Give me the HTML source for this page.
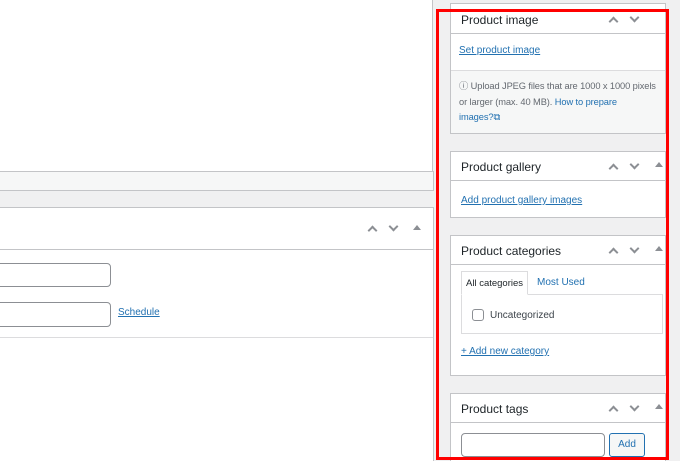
<!DOCTYPE html>
<html><head><style>
*{box-sizing:border-box;margin:0;padding:0}
html,body{width:680px;height:461px;overflow:hidden}
body{background:#f0f0f1;font-family:"Liberation Sans",sans-serif;font-size:13px;color:#1d2327;position:relative}
.abs{position:absolute}
.box{position:absolute;background:#fff;border:1px solid #c3c4c7}
.hd{position:absolute;left:0;right:0;top:0;border-bottom:1px solid #c3c4c7}
.ttl{position:absolute;left:10px;font-size:12px;color:#1d2327}
a{color:#2271b1;text-decoration:underline;font-size:10px}
.arr{position:absolute;width:7px;height:7px;border-left:2px solid #8c8f94;border-top:2px solid #8c8f94}
.up{transform:rotate(45deg)}
.dn{transform:rotate(225deg)}
.tri{position:absolute;width:0;height:0;border-left:4px solid transparent;border-right:4px solid transparent;border-bottom:5px solid #8c8f94}
.inp{position:absolute;border:1px solid #8c8f94;border-radius:4px;background:#fff}
</style></head><body>
<div class="abs" style="left:0;top:0;width:433px;height:172px;background:#fff;border-right:1px solid #c3c4c7"></div>
<div class="abs" style="left:0;top:171px;width:434px;height:20px;background:#f6f7f7;border-top:1px solid #c3c4c7;border-bottom:1px solid #c3c4c7;border-right:1px solid #c3c4c7"></div>
<div class="box" style="left:-2px;top:207px;width:436px;height:270px">
 <div class="hd" style="height:42px"></div>
 <div class="arr up" style="left:370px;top:19px"></div>
 <div class="arr dn" style="left:391px;top:15px"></div>
 <div class="tri" style="left:414px;top:17px"></div>
 <div class="inp" style="left:-5px;top:55px;width:117px;height:24px"></div>
 <div class="inp" style="left:-5px;top:94px;width:117px;height:25px"></div>
 <a class="abs" style="left:119px;top:99px">Schedule</a>
 <div class="abs" style="left:0;right:0;top:129px;border-top:1px solid #dcdcde"></div>
</div>
<div class="box" style="left:450px;top:3px;width:216px;height:131px">
 <div class="hd" style="height:30px"></div>
 <div class="ttl" style="top:9px">Product image</div>
 <div class="arr up" style="left:159px;top:14px"></div>
 <div class="arr dn" style="left:180px;top:10px"></div>
 <a class="abs" style="left:8px;top:41px">Set product image</a>
 <div class="abs" style="left:0;right:0;top:66px;bottom:0;background:#f6f7f7;border-top:1px solid #dcdcde;padding:8px 2px 0 8px;font-size:9.3px;line-height:15.5px;color:#646970;letter-spacing:-0.1px;white-space:nowrap">ⓘ Upload JPEG files that are 1000 x 1000 pixels<br>or larger (max. 40 MB). <span style="color:#2271b1">How to prepare</span><br><span style="color:#2271b1">images?⧉</span></div>
</div>
<div class="box" style="left:450px;top:151px;width:216px;height:67px">
 <div class="hd" style="height:29px"></div>
 <div class="ttl" style="top:8px">Product gallery</div>
 <div class="arr up" style="left:159px;top:13px"></div>
 <div class="arr dn" style="left:180px;top:9px"></div>
 <div class="tri" style="left:204px;top:10px"></div>
 <a class="abs" style="left:10px;top:43px">Add product gallery images</a>
</div>
<div class="box" style="left:450px;top:235px;width:216px;height:141px">
 <div class="hd" style="height:29px"></div>
 <div class="ttl" style="top:8px">Product categories</div>
 <div class="arr up" style="left:159px;top:13px"></div>
 <div class="arr dn" style="left:180px;top:9px"></div>
 <div class="tri" style="left:204px;top:10px"></div>
 <div class="abs" style="left:10px;top:58px;width:202px;height:40px;border:1px solid #dcdcde"></div>
 <div class="abs" style="left:10px;top:35px;width:67px;height:24px;border:1px solid #dcdcde;border-bottom:1px solid #fff;background:#fff;font-size:9.5px;padding:6px 4px;white-space:nowrap">All categories</div>
 <div class="abs" style="left:86px;top:41px;font-size:10px;color:#2271b1">Most Used</div>
 <div class="abs" style="left:21px;top:73px;width:12px;height:12px;border:1px solid #8c8f94;border-radius:3px"></div>
 <div class="abs" style="left:39px;top:74px;font-size:10px;color:#3c434a">Uncategorized</div>
 <a class="abs" style="left:10px;top:110px">+ Add new category</a>
</div>
<div class="box" style="left:450px;top:393px;width:216px;height:80px">
 <div class="hd" style="height:29px"></div>
 <div class="ttl" style="top:8px">Product tags</div>
 <div class="arr up" style="left:159px;top:13px"></div>
 <div class="arr dn" style="left:180px;top:9px"></div>
 <div class="tri" style="left:204px;top:10px"></div>
 <div class="inp" style="left:10px;top:39px;width:144px;height:24px"></div>
 <div class="abs" style="left:158px;top:39px;width:36px;height:24px;border:1px solid #2271b1;border-radius:3px;background:#f6f7f7;color:#2271b1;font-size:10px;text-align:center;line-height:22px">Add</div>
</div>
<div class="abs" style="left:436px;top:9px;width:233px;height:451px;border:3px solid #f00"></div>
</body></html>
